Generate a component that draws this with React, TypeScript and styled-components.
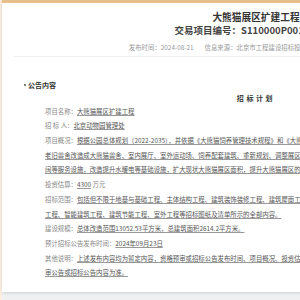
import React from 'react';
import styled, { createGlobalStyle } from 'styled-components';

const GlobalStyle = createGlobalStyle`
  html, body {
    margin: 0;
    padding: 0;
    background: #eef0f2;
    overflow: hidden;
  }
  body {
    font-family: "Noto Sans CJK SC", "Noto Sans", sans-serif;
  }
`;

const Page = styled.div`
  display: flex;
  align-items: flex-start;
  border-left: 2px solid #fcefe1;
  min-height: 300px;
  box-sizing: border-box;
`;

const Card = styled.div`
  flex: none;
  width: 508px;
  box-sizing: border-box;
  padding: 0 12px 11px;
  background: #fff;
  border-top: 3px solid #e6bf8b;
  box-shadow: 0 1px 3px rgba(0, 0, 0, 0.14);
`;

const Header = styled.div`
  text-align: center;
  padding-top: 8px;
`;

const Title = styled.h1`
  margin: 0;
  font-size: 9.7px;
  line-height: 12px;
  font-weight: 700;
  color: #333;
`;

const Code = styled.div`
  margin-top: 1px;
  font-size: 9.5px;
  line-height: 12px;
  font-weight: 700;
  color: #444;
`;

const Meta = styled.div`
  display: flex;
  justify-content: center;
  gap: 11px;
  margin-top: 7px;
  font-size: 6.4px;
  line-height: 10px;
  color: #999;
  white-space: nowrap;
`;

const Divider = styled.div`
  margin-top: 3px;
  height: 1px;
  background: #eeeeee;
`;

const SectionTitle = styled.div`
  display: flex;
  align-items: center;
  gap: 2px;
  margin-top: 23px;
  padding-left: 10px;
  font-size: 7px;
  line-height: 10px;
  font-weight: 700;
  color: #333;

  &::before {
    content: '';
    width: 2px;
    height: 2px;
    border-radius: 50%;
    background: #555;
  }
`;

const PlanTitle = styled.div`
  margin-top: 3px;
  text-align: center;
  font-size: 7px;
  line-height: 10px;
  font-weight: 700;
  letter-spacing: 2.6px;
  color: #333;
`;

const Rows = styled.div`
  margin-top: 1.6px;
  padding-left: 31px;
  font-size: 6.4px;
  line-height: 14.7px;
  white-space: nowrap;
`;

const Row = styled.div`
  color: #888;
`;

const Value = styled.span`
  color: #555;
  text-decoration: underline;
  text-decoration-color: #999;
`;

const rows: { label: string; value: React.ReactNode; tail?: string }[] = [
  { label: '项目名称：', value: '大熊猫展区扩建工程' },
  { label: '招 标 人：', value: '北京动物园管理处' },
  {
    label: '项目概况：',
    value: (
      <>
        根据公园总体规划（2022-2035），并依据《大熊猫饲养管理技术规程》和《大熊猫馆建设规范》
        <br />
        老旧兽舍改造成大熊猫兽舍、室内展厅、室外运动场、饲养配套建筑、重新规划、调整展区
        <br />
        阔等服务设施，改造提升水暖电等基础设施，扩大现状大熊猫展区面积，提升大熊猫展区的
      </>
    ),
  },
  { label: '投资估算：', value: '4300', tail: ' 万元' },
  {
    label: '招标范围：',
    value: (
      <>
        包括但不限于地基与基础工程、主体结构工程、建筑装饰装修工程、建筑屋面工程、通风与空调
        <br />
        工程、智能建筑工程、建筑节能工程、室外工程等招标图纸及清单所示的全部内容。
      </>
    ),
  },
  { label: '建设规模：', value: '总体改造范围13052.53平方米，总建筑面积2614.2平方米。' },
  { label: '预计招标公告发布时间：', value: '2024年09月23日' },
  {
    label: '其他说明：',
    value: (
      <>
        上述发布内容均为暂定内容，资格预审或招标公告发布时间、项目概况、投资估算等以资格预
        <br />
        审公告或招标公告内容为准。
      </>
    ),
  },
];

export default function App() {
  return (
    <>
      <GlobalStyle />
      <Page>
        <Card>
          <Header>
            <Title>大熊猫展区扩建工程</Title>
            <Code>交易项目编号：S110000P001240801</Code>
            <Meta>
              <span>发布时间：2024-08-21</span>
              <span>信息来源：北京市工程建设招标投标交易网</span>
              <span>浏览次数：1256</span>
            </Meta>
          </Header>
          <Divider />
          <SectionTitle>公告内容</SectionTitle>
          <PlanTitle>招标计划</PlanTitle>
          <Rows>
            {rows.map((r) => (
              <Row key={r.label}>
                {r.label}
                <Value>{r.value}</Value>
                {r.tail}
              </Row>
            ))}
          </Rows>
        </Card>
      </Page>
    </>
  );
}
